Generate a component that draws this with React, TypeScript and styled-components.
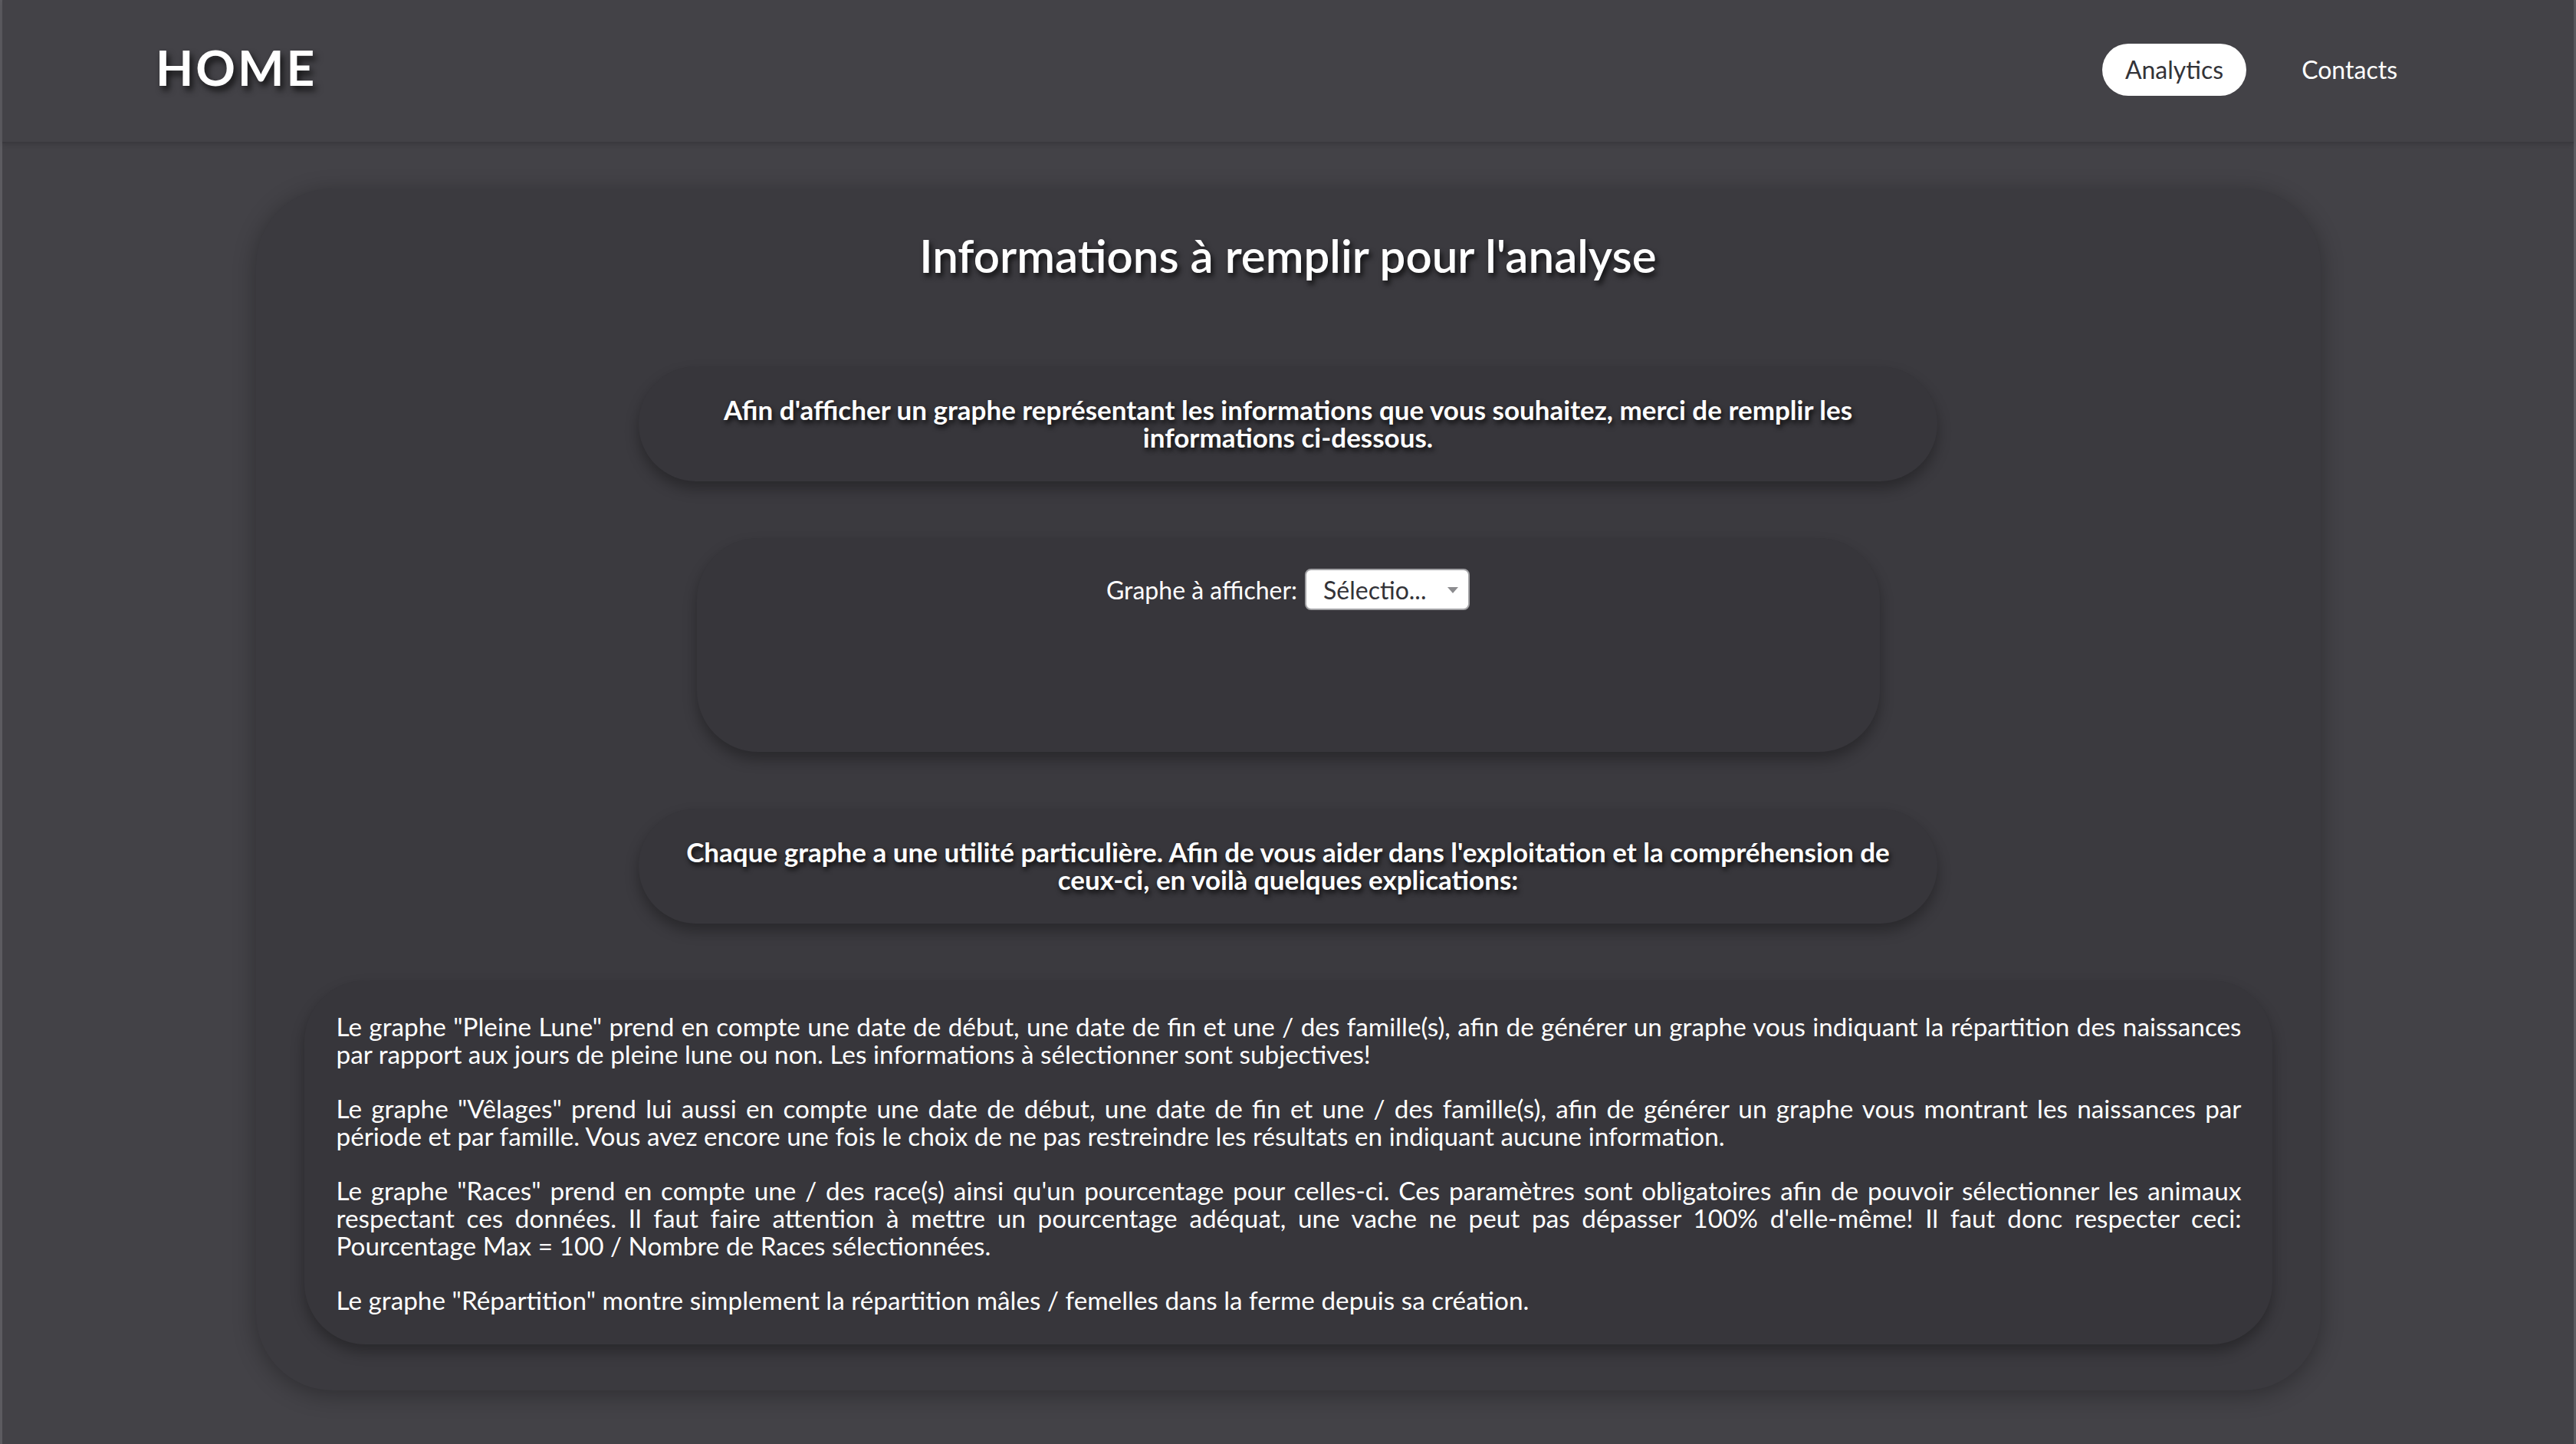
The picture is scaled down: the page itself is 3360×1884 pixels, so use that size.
import React from 'react';
import styled, { createGlobalStyle } from 'styled-components';

const GlobalStyle = createGlobalStyle`
  html, body {
    margin: 0;
    padding: 0;
    background: #434247;
  }
  body {
    font-family: Lato, "Open Sans", sans-serif;
    color: #ffffff;
  }
  * {
    box-sizing: border-box;
  }
`;

const Page = styled.div`
  min-height: 1884px;
  background: #434247;
  border-left: 3px solid #5c5b60;
  border-right: 3px solid #5c5b60;
`;

const NavBar = styled.nav`
  height: 187px;
  display: flex;
  align-items: center;
  justify-content: space-between;
  padding: 0 200px 4px 200px;
  border-bottom: 2px solid #3a393e;
  box-shadow: 0 2px 6px rgba(0, 0, 0, 0.12);
`;

const Brand = styled.div`
  font-size: 64px;
  font-weight: 700;
  letter-spacing: 3px;
  margin-top: -6px;
  text-shadow: 4px 6px 8px rgba(0, 0, 0, 0.7);
`;

const NavLinks = styled.div`
  display: flex;
  align-items: center;
  gap: 42px;
`;

const NavLink = styled.a<{ $active?: boolean }>`
  display: flex;
  align-items: center;
  height: 68px;
  padding: 0 30px;
  border-radius: 34px;
  font-size: 32px;
  text-decoration: none;
  background: ${p => (p.$active ? '#ffffff' : 'transparent')};
  color: ${p => (p.$active ? '#333338' : '#ffffff')};
`;

const Main = styled.main`
  padding: 59px 0 71px;
`;

const Card = styled.section`
  width: 2693px;
  margin: 0 auto;
  padding: 0 64px 60px;
  background: #3b3a3f;
  border-radius: 100px;
  box-shadow: 0 6px 30px rgba(0, 0, 0, 0.3);
  display: flex;
  flex-direction: column;
  align-items: center;
`;

const Title = styled.h1`
  margin: 51px 0 109px;
  font-size: 60px;
  line-height: 72px;
  font-weight: 600;
  text-shadow: 3px 5px 7px rgba(0, 0, 0, 0.75);
`;

const Panel = styled.div<{ $width: number }>`
  width: ${p => p.$width}px;
  background: #37363b;
  border-radius: 80px;
  box-shadow: 0 10px 18px rgba(0, 0, 0, 0.3);
  & + & {
    margin-top: 74px;
  }
`;

const Notice = styled(Panel)`
  padding: 38px 60px 40px;
  text-align: center;
  font-size: 35px;
  line-height: 36px;
  font-weight: 700;
  text-shadow: 2px 4px 6px rgba(0, 0, 0, 0.8);
`;

const FormPanel = styled(Panel)`
  height: 279px;
  padding-top: 40px;
  display: flex;
  justify-content: center;
  align-items: flex-start;
`;

const FieldRow = styled.label`
  display: flex;
  align-items: center;
  gap: 10px;
  font-size: 32px;
`;

const SelectBox = styled.div`
  position: relative;
  width: 215px;
  height: 54px;
  padding-left: 22px;
  display: flex;
  align-items: center;
  background: #ffffff;
  border: 2px solid #a3a3a6;
  border-radius: 8px;
  color: #333338;
  font-size: 32px;

  &::after {
    content: '';
    position: absolute;
    right: 13px;
    top: 22px;
    border-left: 7px solid transparent;
    border-right: 7px solid transparent;
    border-top: 8px solid #8c8c8f;
  }
`;

const Explanations = styled(Panel)`
  padding: 42px 40px 40px 42px;
  font-size: 33.3px;
  line-height: 36px;
  text-align: justify;
`;

const Paragraph = styled.p`
  margin: 0;
  & + & {
    margin-top: 35px;
  }
`;

const App: React.FC = () => {
  return (
    <>
      <GlobalStyle />
      <Page>
        <NavBar>
          <Brand>HOME</Brand>
          <NavLinks>
            <NavLink $active href="#">Analytics</NavLink>
            <NavLink href="#">Contacts</NavLink>
          </NavLinks>
        </NavBar>

        <Main>
          <Card>
            <Title>Informations à remplir pour l'analyse</Title>

            <Notice $width={1694}>
              Afin d'afficher un graphe représentant les informations que vous souhaitez, merci de remplir les informations ci-dessous.
            </Notice>

            <FormPanel $width={1543}>
              <FieldRow>
                Graphe à afficher:
                <SelectBox>Sélectio...</SelectBox>
              </FieldRow>
            </FormPanel>

            <Notice $width={1694}>
              Chaque graphe a une utilité particulière. Afin de vous aider dans l'exploitation et la compréhension de ceux-ci, en voilà quelques explications:
            </Notice>

            <Explanations $width={2567}>
              <Paragraph>
                Le graphe "Pleine Lune" prend en compte une date de début, une date de fin et une / des famille(s), afin de générer un graphe vous indiquant la répartition des naissances par rapport aux jours de pleine lune ou non. Les informations à sélectionner sont subjectives!
              </Paragraph>
              <Paragraph>
                Le graphe "Vêlages" prend lui aussi en compte une date de début, une date de fin et une / des famille(s), afin de générer un graphe vous montrant les naissances par période et par famille. Vous avez encore une fois le choix de ne pas restreindre les résultats en indiquant aucune information.
              </Paragraph>
              <Paragraph>
                Le graphe "Races" prend en compte une / des race(s) ainsi qu'un pourcentage pour celles-ci. Ces paramètres sont obligatoires afin de pouvoir sélectionner les animaux respectant ces données. Il faut faire attention à mettre un pourcentage adéquat, une vache ne peut pas dépasser 100% d'elle-même! Il faut donc respecter ceci: Pourcentage Max = 100 / Nombre de Races sélectionnées.
              </Paragraph>
              <Paragraph>
                Le graphe "Répartition" montre simplement la répartition mâles / femelles dans la ferme depuis sa création.
              </Paragraph>
            </Explanations>
          </Card>
        </Main>
      </Page>
    </>
  );
};

export default App;
